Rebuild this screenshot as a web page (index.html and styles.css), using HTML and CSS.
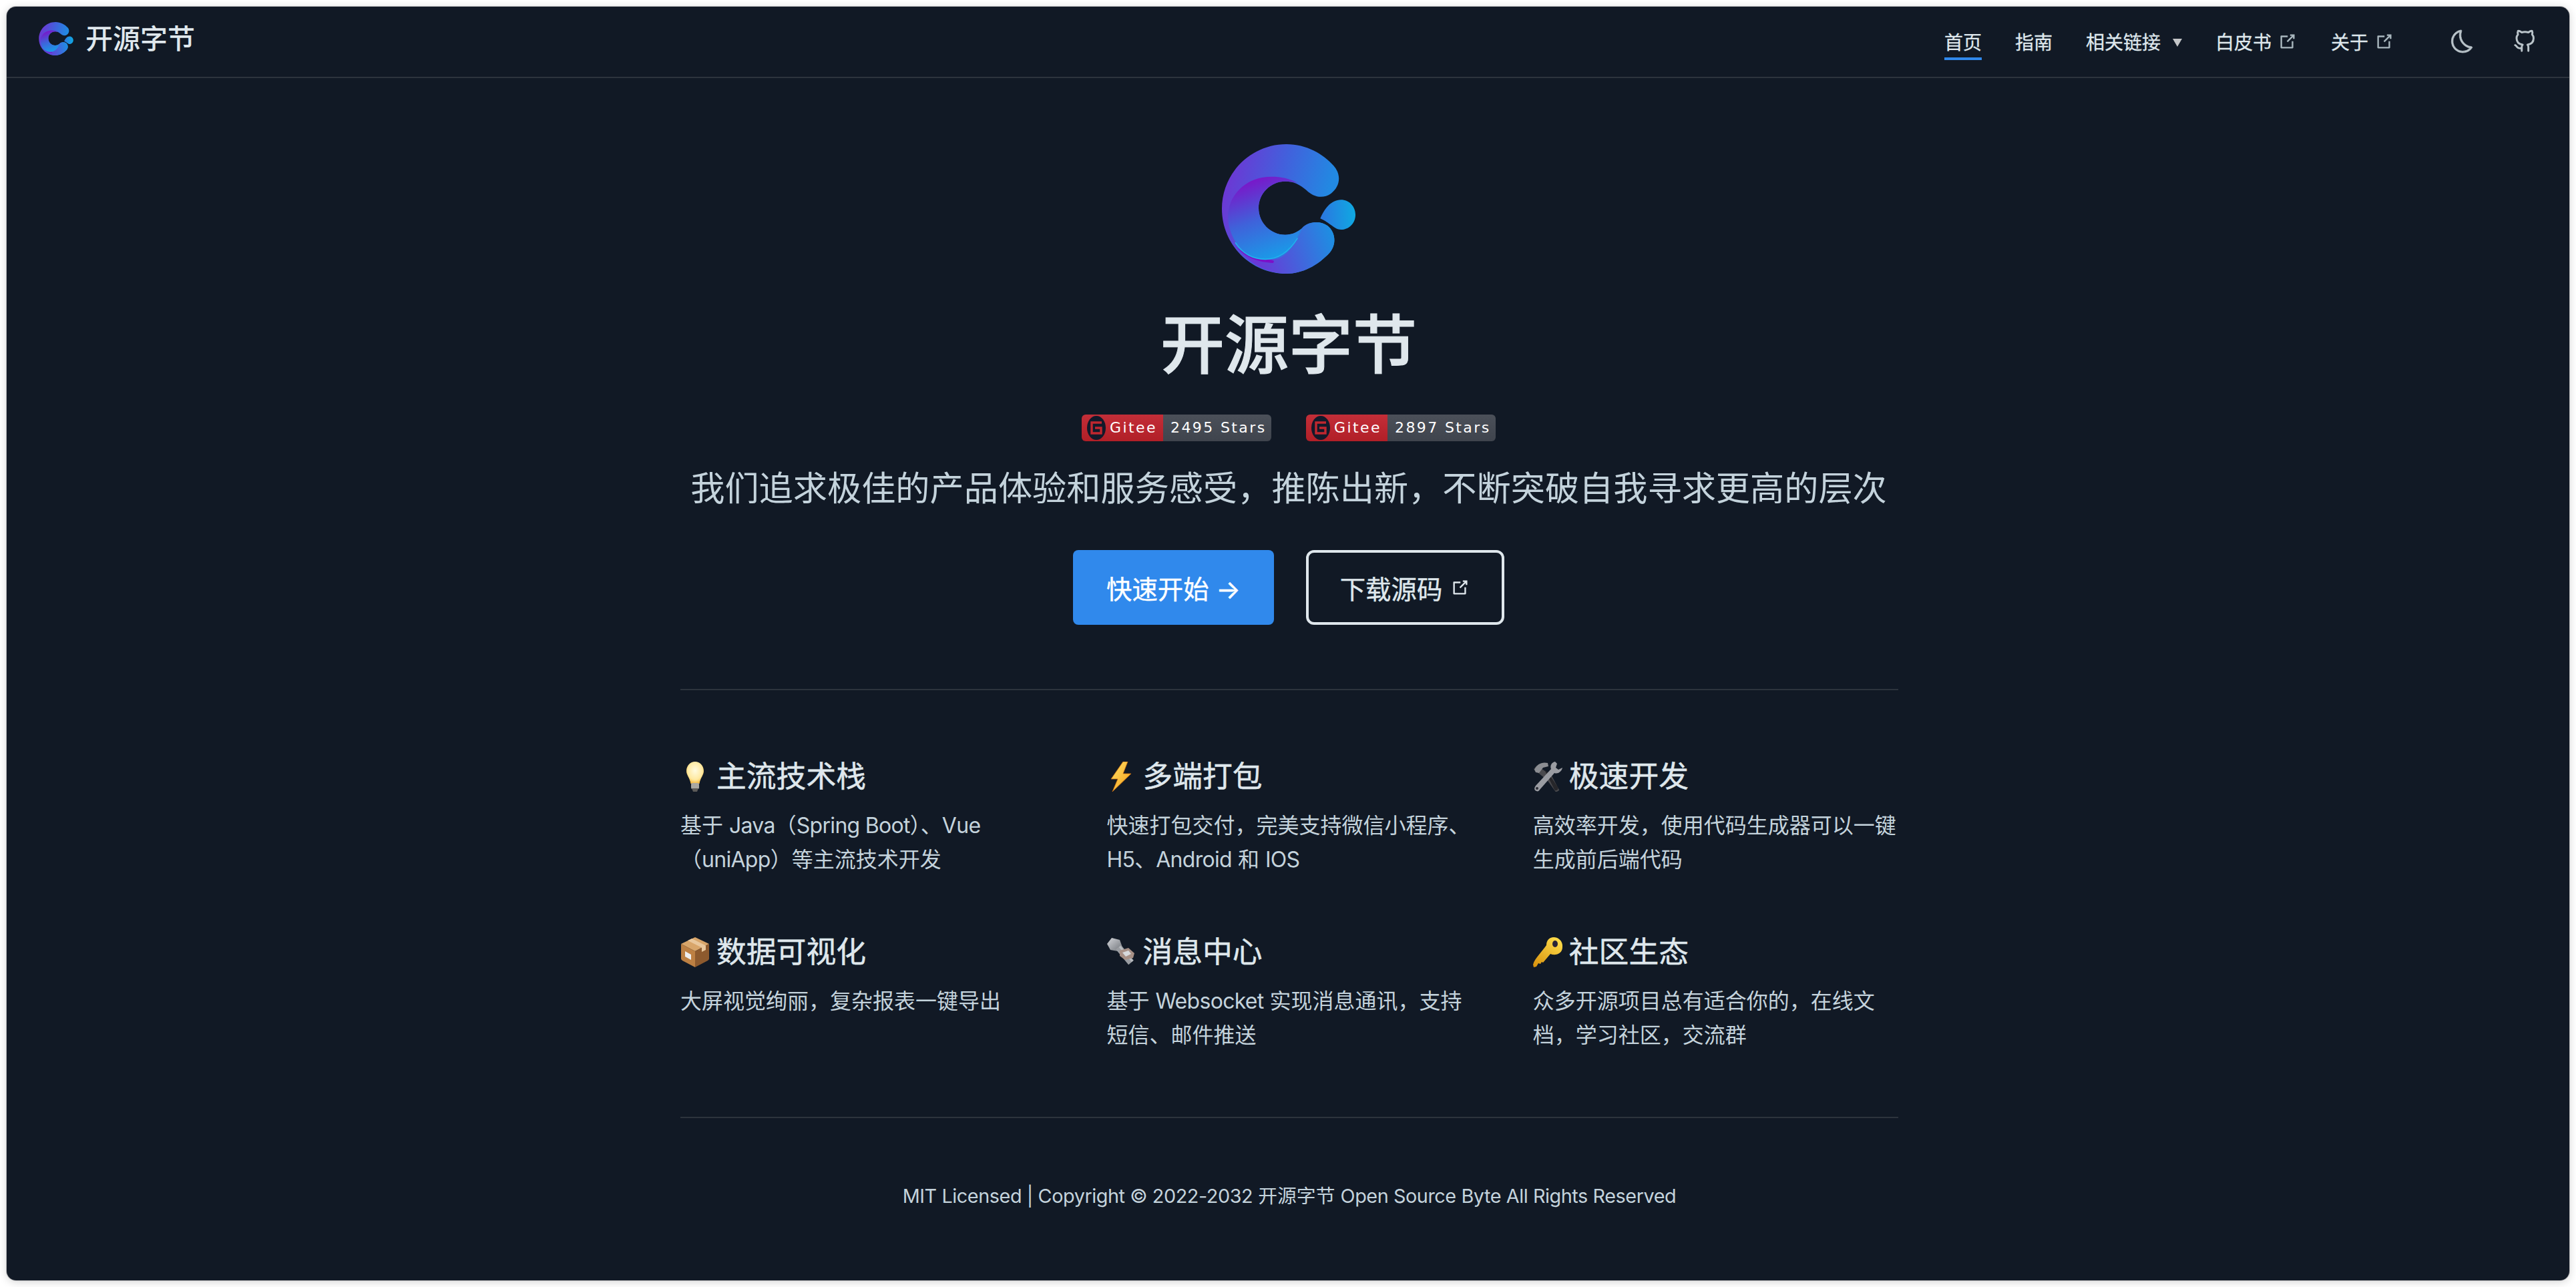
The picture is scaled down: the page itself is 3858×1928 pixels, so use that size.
FILE: index.html
```html
<!DOCTYPE html>
<html lang="zh-CN">
<head>
<meta charset="utf-8">
<title>开源字节</title>
<link rel="stylesheet" href="styles.css">
</head>
<body>
<svg class="defs" width="0" height="0" aria-hidden="true">
  <defs>
    <linearGradient id="gOuter" gradientUnits="userSpaceOnUse" x1="280" y1="180" x2="720" y2="300">
      <stop offset="0" stop-color="#6c38d4"/><stop offset=".5" stop-color="#4260dc"/><stop offset="1" stop-color="#2289e2"/>
    </linearGradient>
    <linearGradient id="gLow" gradientUnits="userSpaceOnUse" x1="400" y1="600" x2="740" y2="500">
      <stop offset="0" stop-color="#6a38d6"/><stop offset="1" stop-color="#1e8ee2"/>
    </linearGradient>
    <linearGradient id="gInner" gradientUnits="userSpaceOnUse" x1="340" y1="240" x2="470" y2="590">
      <stop offset="0" stop-color="#7d12c8"/><stop offset=".5" stop-color="#3f62da"/><stop offset="1" stop-color="#1a9ae8"/>
    </linearGradient>
    <linearGradient id="gDrop" gradientUnits="userSpaceOnUse" x1="690" y1="400" x2="840" y2="395">
      <stop offset="0" stop-color="#2a78e0"/><stop offset="1" stop-color="#0fa9e2"/>
    </linearGradient>
    <symbol id="logo" viewBox="240 78 600 582">
      <path fill="url(#gOuter)" d="M530 78C620 78 695 122 742 175C778 215 772 268 730 300C692 326 650 315 620 285C590 258 560 245 525 245C458 245 405 300 405 365C405 430 458 485 525 485C560 485 585 470 605 450C632 426 682 420 715 445C752 475 755 530 725 565C670 625 600 660 530 660C370 660 240 530 240 368C240 208 370 78 530 78Z"/>
      <path fill="url(#gLow)" d="M300 535C340 590 400 600 480 595C530 590 575 520 605 450C632 426 682 420 715 445C752 475 755 530 725 565C670 625 600 660 530 660C440 660 360 615 300 535Z"/>
      <path fill="#7b10c8" d="M300 535C330 565 380 590 440 596C470 598 480 600 470 612C410 610 345 590 300 535Z"/>
      <path fill="url(#gInner)" d="M580 252C530 224 470 220 420 228C330 245 268 320 268 400C268 510 345 595 435 595C500 595 555 555 595 460C575 478 550 485 525 485C458 485 405 430 405 365C405 300 458 245 525 245C545 245 565 248 580 252Z"/>
      <path fill="none" stroke="#1fb4ec" stroke-width="5" d="M300 520C340 580 390 595 435 595C490 595 540 565 580 500"/>
      <path fill="url(#gDrop)" d="M682 412C700 370 730 328 775 328C812 328 840 358 840 395C840 432 812 462 775 462C745 462 725 430 682 412Z"/>
    </symbol>
    <symbol id="ext" viewBox="0 0 100 100">
      <path fill="currentColor" d="M18.8 85.1h56l0 0c2.2 0 4-1.8 4-4v-32h-8v28h-48v-48h28v-8h-32l0 0c-2.2 0-4 1.8-4 4v56C14.8 83.3 16.6 85.1 18.8 85.1z"/>
      <polygon fill="currentColor" points="45.7 48.7 51.3 54.3 77.2 28.5 77.2 37.2 85.2 37.2 85.2 14.9 62.8 14.9 62.8 22.9 71.5 22.9"/>
    </symbol>
  </defs>
</svg>
<div class="window">
  <header class="navbar">
    <a class="brand">
      <svg class="brand-logo"><use href="#logo"/></svg>
      <span class="brand-name">开源字节</span>
    </a>
    <nav class="nav-links">
      <a class="nav-item active">首页</a>
      <a class="nav-item">指南</a>
      <a class="nav-item">相关链接<i class="caret"></i></a>
      <a class="nav-item">白皮书<svg class="ext nav-ext"><use href="#ext"/></svg></a>
      <a class="nav-item">关于<svg class="ext nav-ext"><use href="#ext"/></svg></a>
    </nav>
    <svg class="moon" viewBox="0 0 32 32"><path fill="currentColor" stroke="currentColor" stroke-width=".5" d="M13.502 5.414a15.075 15.075 0 0 0 11.594 18.194a11.113 11.113 0 0 1-7.975 3.39c-.138 0-.278.005-.418 0a11.094 11.094 0 0 1-3.2-21.584M14.98 3a1.002 1.002 0 0 0-.175.016a13.096 13.096 0 0 0 1.825 25.981c.164.006.328 0 .49 0a13.072 13.072 0 0 0 10.703-5.555a1.01 1.01 0 0 0-.783-1.565A13.08 13.08 0 0 1 15.89 4.38A1.015 1.015 0 0 0 14.98 3z"/></svg>
    <svg class="github" viewBox="0 0 24 24" fill="none" stroke="currentColor" stroke-width="2.1" stroke-linecap="round" stroke-linejoin="round"><path d="M9 19c-5 1.500-5-2.500-7-3m14 6v-3.870a3.370 3.370 0 0 0-.94-2.610c3.140-.35 6.440-1.540 6.440-7A5.440 5.440 0 0 0 20 4.770 5.070 5.070 0 0 0 19.910 1S18.730.65 16 2.480a13.380 13.380 0 0 0-7 0C6.270.65 5.090 1 5.090 1A5.070 5.070 0 0 0 5 4.770a5.440 5.440 0 0 0-1.500 3.750c0 5.420 3.300 6.610 6.440 7A3.370 3.370 0 0 0 9 18.130V22"/></svg>
  </header>

  <main class="home">
    <section class="hero">
      <svg class="hero-logo"><use href="#logo"/></svg>
      <h1 class="hero-title">开源字节</h1>
      <div class="badges">
        <span class="badge">
          <span class="badge-left"><svg class="gitee" viewBox="0 0 28 36"><ellipse cx="14" cy="18" rx="14" ry="18" fill="#12192a"/><path fill="none" stroke="#c0272f" stroke-width="3.4" d="M22 10H7v16h14v-8h-9"/></svg>Gitee</span>
          <span class="badge-right">2495 Stars</span>
        </span>
        <span class="badge">
          <span class="badge-left"><svg class="gitee" viewBox="0 0 28 36"><ellipse cx="14" cy="18" rx="14" ry="18" fill="#12192a"/><path fill="none" stroke="#c0272f" stroke-width="3.4" d="M22 10H7v16h14v-8h-9"/></svg>Gitee</span>
          <span class="badge-right">2897 Stars</span>
        </span>
      </div>
      <p class="tagline">我们追求极佳的产品体验和服务感受，推陈出新，不断突破自我寻求更高的层次</p>
      <div class="actions">
        <a class="btn btn-primary">快速开始 →</a>
        <a class="btn btn-outline">下载源码<svg class="ext btn-ext"><use href="#ext"/></svg></a>
      </div>
    </section>

    <section class="features">
      <article class="feature">
        <h2 class="feature-title">
          <svg class="emoji" viewBox="0 0 44 45">
            <defs><radialGradient id="eBulb" cx=".5" cy=".4" r=".6"><stop offset="0" stop-color="#fffbe0"/><stop offset=".7" stop-color="#ffe9a0"/><stop offset="1" stop-color="#f4b840"/></radialGradient></defs>
            <path fill="url(#eBulb)" d="M22 0C29 0 35 6 35 14C35 20 30 24 28.500 33H15.500C14 24 9 20 9 14C9 6 15 0 22 0Z"/>
            <rect x="16" y="32" width="12" height="9" rx="2" fill="#a9a7a2"/>
            <path fill="#5c5a58" d="M17 40h10l-2 5h-6z"/>
          </svg>主流技术栈</h2>
        <p class="feature-text">基于 <span class="latin">Java</span>（<span class="latin">Spring Boot</span>）、<span class="latin">Vue</span>（<span class="latin">uniApp</span>）等主流技术开发</p>
      </article>
      <article class="feature">
        <h2 class="feature-title">
          <svg class="emoji" viewBox="0 0 44 45">
            <defs><linearGradient id="eBolt" x1="0" y1="0" x2="1" y2="1"><stop offset="0" stop-color="#ffe36a"/><stop offset="1" stop-color="#f59a12"/></linearGradient></defs>
            <path fill="url(#eBolt)" stroke="#c96c10" stroke-width=".8" d="M26 0L8 26H18L10 45L38 18H26L33 0Z" transform="translate(-1 0)"/>
          </svg>多端打包</h2>
        <p class="feature-text">快速打包交付，完美支持微信小程序、<span class="latin">H5</span>、<span class="latin">Android</span> 和 <span class="latin">IOS</span></p>
      </article>
      <article class="feature">
        <h2 class="feature-title">
          <svg class="emoji" viewBox="0 0 44 45">
            <path fill="#4a4a4e" stroke="#4a4a4e" stroke-width="1" d="M31 18L9 4 5 9 26 25 39 42 43 39Z" transform="translate(-3 2) rotate(2)"/>
            <path fill="#8b8d92" d="M2 12C6 3 14 0 22 2L23 7L15 9L9 17L4 16Z"/>
            <path fill="#26262a" d="M17 12L22 16L37 38C39 42 34 45 32 42Z"/>
            <path fill="#9a9ca2" d="M33 0C28 1 25 6 27 11L4 36C1 40 2 43 5 44C7 45 9 44 10 42L32 17C37 19 43 15 44 9L38 12L34 9L36 3Z"/>
            <circle cx="6" cy="40" r="2" fill="#2a2c35"/>
          </svg>极速开发</h2>
        <p class="feature-text">高效率开发，使用代码生成器可以一键生成前后端代码</p>
      </article>
      <article class="feature">
        <h2 class="feature-title">
          <svg class="emoji" viewBox="0 0 44 45">
            <path fill="#d8a56a" d="M22 0L43 10L22 21L1 10Z"/>
            <path fill="#bd8043" d="M1 10L22 21V45L3 35C1.800 34 1 33 1 32Z"/>
            <path fill="#8d5a2e" d="M43 10L22 21V45L41 35C42.300 34 43 33 43 32Z"/>
            <path fill="#e9c79c" d="M11 5L32 15.500V22L38 19V12.500L17 2Z"/>
            <path fill="#eee" d="M7 21L16 26V34L7 29Z"/>
          </svg>数据可视化</h2>
        <p class="feature-text">大屏视觉绚丽，复杂报表一键导出</p>
      </article>
      <article class="feature">
        <h2 class="feature-title">
          <svg class="emoji" viewBox="0 0 44 45">
            <defs><linearGradient id="eBoltS" x1="0" y1="0" x2="1" y2="1"><stop offset="0" stop-color="#d4d6da"/><stop offset="1" stop-color="#6e7278"/></linearGradient></defs>
            <path fill="url(#eBoltS)" d="M8 1L20 4L24 15L17 21L6 19L1 10Z"/>
            <path stroke="#9a9da2" stroke-width="10" fill="none" d="M18 15L37 38"/>
            <path stroke="#b9bcc0" stroke-width="3" fill="none" d="M20 14L39 36"/>
            <path fill="#a79086" d="M20 20L33 16L42 24L40 31L28 34L20 28Z"/>
            <path fill="#d7d9dc" d="M24 23L33 20L37 25L29 29Z"/>
          </svg>消息中心</h2>
        <p class="feature-text">基于 <span class="latin">Websocket</span> 实现消息通讯，支持短信、邮件推送</p>
      </article>
      <article class="feature">
        <h2 class="feature-title">
          <svg class="emoji" viewBox="0 0 44 45">
            <defs><linearGradient id="eKey" x1=".8" y1="0" x2=".1" y2="1"><stop offset="0" stop-color="#ffdc4a"/><stop offset="1" stop-color="#d8930f"/></linearGradient></defs>
            <path fill="url(#eKey)" d="M31 0C38 0 45 6 44 15C44 23 37 27 29 26L26 25L15 38L13 37L11 40L8 39L5 44L1 45L0 41C1 36 5 31 9 26L17 16L20 12C20 5 24 0 31 0Z"/>
            <ellipse cx="33" cy="10" rx="4" ry="5" fill="#2a2438"/>
          </svg>社区生态</h2>
        <p class="feature-text">众多开源项目总有适合你的，在线文档，学习社区，交流群</p>
      </article>
    </section>

    <footer class="footer"><span class="latin-foot">MIT Licensed | Copyright © 2022-2032</span> 开源字节 <span class="latin-foot">Open Source Byte All Rights Reserved</span></footer>
  </main>
</div>
</body>
</html>
```
FILE: styles.css
```css
* { box-sizing: border-box; }
html, body { margin: 0; padding: 0; background: #fff; }
body {
  height: 1928px;
  padding: 10px;
  overflow: hidden;
  font-family: Inter, "Noto Sans CJK SC", sans-serif;
  color: #dfe7ec;
}
a { color: inherit; text-decoration: none; }
.defs { position: absolute; }
.latin { letter-spacing: -0.022em; }
.latin-foot { letter-spacing: -0.015em; }

.window {
  height: 1908px;
  background: #111925;
  border-radius: 14px;
  box-shadow: 0 0 0 1px rgba(120,120,125,.45), 0 2px 14px rgba(0,0,0,.18);
  overflow: hidden;
}

.navbar {
  display: flex;
  align-items: center;
  height: 107px;
  padding: 0 50px 0 48px;
  border-bottom: 2px solid #2d343d;
}
.brand { display: flex; align-items: center; margin-bottom: 10px; }
.brand-logo { width: 52px; height: 50px; margin-right: 18px; }
.brand-name { font-size: 41px; font-weight: 500; line-height: 48px; color: #dfe7ec; }
.nav-links { display: flex; align-items: center; gap: 50px; margin-left: auto; margin-right: 80px; }
.nav-item {
  display: flex;
  align-items: center;
  font-size: 28px;
  line-height: 40px;
  font-weight: 400;
  -webkit-text-stroke: .3px #dfe7ec;
  color: #dfe7ec;
  padding: 4px 0 2px;
  border-bottom: 4px solid transparent;
  margin-top: 4px;
}
.nav-item.active { border-bottom-color: #3089ec; }
.caret {
  width: 0; height: 0;
  margin-left: 18px;
  border-left: 7.5px solid transparent;
  border-right: 7.5px solid transparent;
  border-top: 12px solid #c4c6c8;
}
.ext { color: #a9b7be; flex: none; }
.nav-ext { width: 30px; height: 30px; margin-left: 9px; margin-top: -4px; }
.moon { width: 42px; height: 42px; color: #b9c3c9; margin-right: 56px; margin-top: -2px; flex: none; }
.github { width: 34px; height: 36px; color: #b9c3c9; margin-top: -2px; flex: none; }

.home { width: 1920px; margin: 0 auto; padding: 0 46px 0 50px; }

.hero { display: flex; flex-direction: column; align-items: center; padding-top: 99px; margin-left: -2px; }
.hero-logo { width: 200px; height: 194px; display: block; }
.hero-title {
  margin: 45px 0 0;
  font-size: 96px;
  line-height: 122px;
  font-weight: 500;
  -webkit-text-stroke: 1px #dfe7ec;
  color: #dfe7ec;
}
.badges { display: flex; gap: 52px; margin-top: 44px; }
.badge {
  display: flex;
  height: 40px;
  width: 284px;
  border-radius: 6px;
  overflow: hidden;
  font-family: "DejaVu Sans", sans-serif;
  font-size: 22px;
  letter-spacing: 2.4px;
  line-height: 40px;
  color: #fff;
}
.badge-left {
  display: flex;
  align-items: center;
  width: 122px;
  padding-left: 8px;
  background: linear-gradient(#c32e38, #b11f27);
}
.gitee { width: 28px; height: 36px; margin-right: 6px; flex: none; }
.badge-right { flex: 1; padding-left: 11px; background: linear-gradient(#4b5059, #3f444d); white-space: nowrap; }
.tagline {
  margin: 30px 0 0;
  font-size: 51.2px;
  line-height: 80px;
  color: #c4d3dc;
}
.actions { display: flex; gap: 48px; margin-top: 53px; }
.btn {
  display: flex;
  align-items: center;
  height: 112px;
  border-radius: 8px;
  font-size: 38.4px;
  font-weight: 400;
  -webkit-text-stroke: .4px currentColor;
  white-space: nowrap;
}
.btn-primary { width: 301px; justify-content: center; background: #3089ec; color: #fff; }
.btn-outline { width: 297px; justify-content: center; border: 4px solid #dfe7ec; color: #dfe7ec; border-radius: 12px; }
.btn-ext { width: 30px; height: 30px; margin-left: 12px; color: #dfe7ec; }

.features {
  display: flex;
  flex-wrap: wrap;
  justify-content: space-between;
  margin-top: 96px;
  padding: 99px 0 0;
  border-top: 2px solid #2d343d;
}
.feature { width: 30%; height: 263px; }
.feature-title {
  display: flex;
  align-items: center;
  margin: 0;
  font-size: 44.8px;
  line-height: 60px;
  font-weight: 400;
  -webkit-text-stroke: .5px #dfe7ec;
  color: #dfe7ec;
}
.emoji { width: 44px; height: 45px; margin-right: 10px; flex: none; }
.feature-text {
  margin: 18px 0 0;
  font-size: 32px;
  line-height: 51.2px;
  color: #c4d3dc;
}

.footer {
  margin-top: 14px;
  padding: 87px 0 0;
  border-top: 2px solid #2d343d;
  text-align: center;
  font-size: 28.8px;
  line-height: 60px;
  color: #c4d3dc;
}
```
